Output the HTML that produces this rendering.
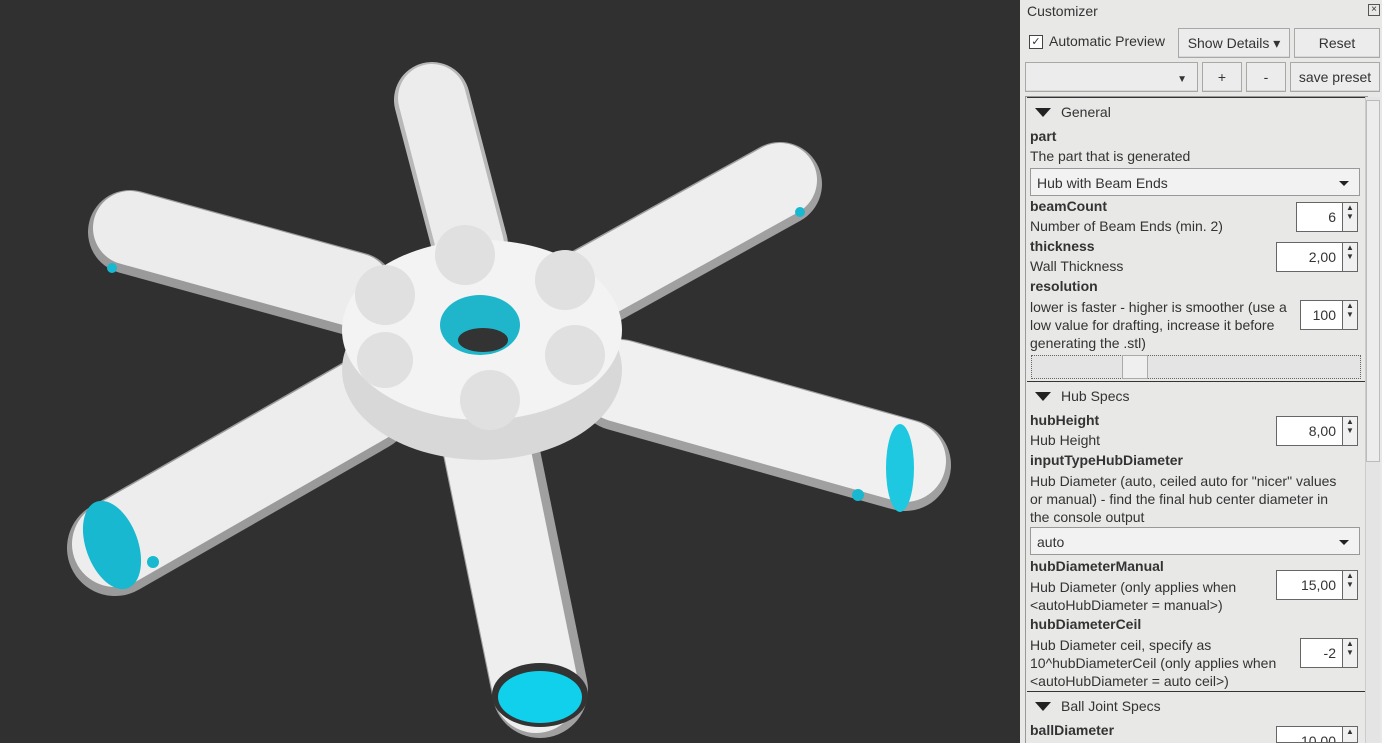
<!DOCTYPE html><html style="height:743px;overflow:hidden"><head><style>
body{margin:0;width:1382px;height:743px;overflow:hidden;background:#303030;font-family:"Liberation Sans","DejaVu Sans",sans-serif;font-size:14px;color:#333;position:relative}
#w{position:absolute;left:0;top:0;width:1382px;height:743px;overflow:hidden}
#p{position:absolute;left:1020px;top:0;width:362px;height:743px;background:#e8e8e7}
.a{position:absolute;white-space:nowrap}
.btn{position:absolute;border:1px solid #a8a8a8;background:#ececec;box-shadow:inset 0 -1px #d8d8d8;text-align:center;line-height:28px;color:#333}
.b{font-weight:bold}
.in{position:absolute;background:#fff;border:1px solid #666;border-right:none;text-align:right;padding-right:6px;box-sizing:border-box;line-height:28px}
.sp{position:absolute;width:16px;border:1px solid #666;background:#f0f0f0;font-size:8px;text-align:center;box-sizing:border-box}
.hd{position:absolute;left:1027px;width:338px;height:28px;border-top:1px solid #333;background:#e8e8e7;line-height:28px;font-size:14px}
.hd:before{content:"";position:absolute;left:8px;top:10px;border-left:8px solid transparent;border-right:8px solid transparent;border-top:9px solid #222}
.cb{position:absolute;left:1030px;width:330px;height:28px;border:1px solid #999;background:#f2f2f2;line-height:28px;box-sizing:border-box;padding-left:6px}
.cb:after{content:"";position:absolute;right:10px;top:12px;border-left:5px solid transparent;border-right:5px solid transparent;border-top:5px solid #222}
</style></head><body><div id="w">
<svg width="1020" height="743" style="position:absolute;left:0;top:0">
<g stroke-linecap="round" fill="none">
<line x1="432" y1="100" x2="470" y2="245" stroke="#b8b8b8" stroke-width="76"/>
<line x1="432" y1="98" x2="470" y2="245" stroke="#ececec" stroke-width="68"/>
<line x1="130" y1="232" x2="355" y2="294" stroke="#9a9a9a" stroke-width="84"/>
<line x1="130" y1="228" x2="355" y2="290" stroke="#ececec" stroke-width="74"/>
<line x1="780" y1="184" x2="585" y2="292" stroke="#a0a0a0" stroke-width="84"/>
<line x1="780" y1="180" x2="585" y2="288" stroke="#eeeeee" stroke-width="74"/>
<line x1="905" y1="465" x2="620" y2="385" stroke="#a0a0a0" stroke-width="92"/>
<line x1="905" y1="461" x2="620" y2="381" stroke="#f0f0f0" stroke-width="82"/>
<line x1="115" y1="548" x2="365" y2="405" stroke="#9a9a9a" stroke-width="96"/>
<line x1="115" y1="544" x2="365" y2="401" stroke="#ededed" stroke-width="86"/>
<line x1="540" y1="690" x2="490" y2="445" stroke="#a0a0a0" stroke-width="96"/>
<line x1="536" y1="690" x2="486" y2="445" stroke="#eeeeee" stroke-width="86"/>
</g>
<ellipse cx="900" cy="468" rx="14" ry="44" fill="#1ec8e0"/>
<ellipse cx="112" cy="545" rx="26" ry="46" fill="#18b8d0" transform="rotate(-20 112 545)"/>
<ellipse cx="540" cy="695" rx="48" ry="32" fill="#333"/>
<ellipse cx="540" cy="697" rx="42" ry="26" fill="#10d0ec"/>
<ellipse cx="482" cy="370" rx="140" ry="90" fill="#d8d8d8"/>
<ellipse cx="482" cy="330" rx="140" ry="90" fill="#f3f3f3"/>
<g fill="#e0e0e0"><circle cx="465" cy="255" r="30"/><circle cx="385" cy="295" r="30"/><circle cx="565" cy="280" r="30"/><circle cx="385" cy="360" r="28"/><circle cx="575" cy="355" r="30"/><circle cx="490" cy="400" r="30"/></g>
<ellipse cx="480" cy="325" rx="40" ry="30" fill="#1fb6cc"/>
<ellipse cx="483" cy="340" rx="25" ry="12" fill="#333"/>
<circle cx="800" cy="212" r="5" fill="#18b8d0"/><circle cx="112" cy="268" r="5" fill="#18b8d0"/><circle cx="858" cy="495" r="6" fill="#18b8d0"/><circle cx="153" cy="562" r="6" fill="#18b8d0"/>
</svg>
<div id="p"></div>
<div class="a" style="left:1027px;top:3px">Customizer</div>
<div class="a" style="left:1368px;top:4px;width:10px;height:10px;border:1px solid #555;font-size:10px;line-height:10px;text-align:center">×</div>
<div class="a" style="left:1029px;top:35px;width:12px;height:12px;border:1px solid #444;background:#fff;font-size:11px;line-height:12px;text-align:center">✓</div>
<div class="a" style="left:1049px;top:33px">Automatic Preview</div>
<div class="btn" style="left:1178px;top:28px;width:110px;height:28px">Show Details ▾</div>
<div class="btn" style="left:1294px;top:28px;width:84px;height:28px">Reset</div>
<div class="btn" style="left:1025px;top:62px;width:171px;height:28px;text-align:right;padding-right:0"><span style="font-size:10px;margin-right:10px">▼</span></div>
<div class="btn" style="left:1202px;top:62px;width:38px;height:28px">+</div>
<div class="btn" style="left:1246px;top:62px;width:38px;height:28px">-</div>
<div class="btn" style="left:1290px;top:62px;width:88px;height:28px">save preset</div>
<div class="a" style="left:1025px;top:96px;width:342px;height:647px;border-left:1px solid #999;border-top:1px solid #999"></div>
<div class="a" style="left:1365px;top:97px;width:14px;height:646px;background:#e4e4e4;border-left:1px solid #ccc"></div>
<div class="a" style="left:1366px;top:100px;width:12px;height:360px;background:#ececec;border:1px solid #bbb"></div>
<div class="hd" style="top:97px"><span style="margin-left:34px">General</span></div>
<div class="a b" style="left:1030px;top:128px">part</div>
<div class="a" style="left:1030px;top:148px">The part that is generated</div>
<div class="cb" style="top:168px">Hub with Beam Ends</div>
<div class="a b" style="left:1030px;top:198px">beamCount</div>
<div class="a" style="left:1030px;top:218px">Number of Beam Ends (min. 2)</div>
<div class="in" style="left:1296px;top:202px;width:46px;height:30px">6</div><div class="sp" style="left:1342px;top:202px;height:30px">▲<br>▼</div>
<div class="a b" style="left:1030px;top:238px">thickness</div>
<div class="a" style="left:1030px;top:258px">Wall Thickness</div>
<div class="in" style="left:1276px;top:242px;width:66px;height:30px">2,00</div><div class="sp" style="left:1342px;top:242px;height:30px">▲<br>▼</div>
<div class="a b" style="left:1030px;top:278px">resolution</div>
<div class="a" style="left:1030px;top:298px;line-height:18px">lower is faster - higher is smoother (use a<br>low value for drafting, increase it before<br>generating the .stl)</div>
<div class="in" style="left:1300px;top:300px;width:42px;height:30px">100</div><div class="sp" style="left:1342px;top:300px;height:30px">▲<br>▼</div>
<div class="a" style="left:1031px;top:355px;width:328px;height:22px;border:1px dotted #666;background:#e4e4e4"></div>
<div class="a" style="left:1122px;top:355px;width:24px;height:22px;border:1px solid #aaa;background:#efefef"></div>
<div class="hd" style="top:381px"><span style="margin-left:34px">Hub Specs</span></div>
<div class="a b" style="left:1030px;top:412px">hubHeight</div>
<div class="a" style="left:1030px;top:432px">Hub Height</div>
<div class="in" style="left:1276px;top:416px;width:66px;height:30px">8,00</div><div class="sp" style="left:1342px;top:416px;height:30px">▲<br>▼</div>
<div class="a b" style="left:1030px;top:452px">inputTypeHubDiameter</div>
<div class="a" style="left:1030px;top:472px;line-height:18px">Hub Diameter (auto, ceiled auto for "nicer" values<br>or manual) - find the final hub center diameter in<br>the console output</div>
<div class="cb" style="top:527px">auto</div>
<div class="a b" style="left:1030px;top:558px">hubDiameterManual</div>
<div class="a" style="left:1030px;top:578px;line-height:18px">Hub Diameter (only applies when<br>&lt;autoHubDiameter = manual&gt;)</div>
<div class="in" style="left:1276px;top:570px;width:66px;height:30px">15,00</div><div class="sp" style="left:1342px;top:570px;height:30px">▲<br>▼</div>
<div class="a b" style="left:1030px;top:616px">hubDiameterCeil</div>
<div class="a" style="left:1030px;top:636px;line-height:18px">Hub Diameter ceil, specify as<br>10^hubDiameterCeil (only applies when<br>&lt;autoHubDiameter = auto ceil&gt;)</div>
<div class="in" style="left:1300px;top:638px;width:42px;height:30px">-2</div><div class="sp" style="left:1342px;top:638px;height:30px">▲<br>▼</div>
<div class="hd" style="top:691px"><span style="margin-left:34px">Ball Joint Specs</span></div>
<div class="a b" style="left:1030px;top:722px">ballDiameter</div>
<div class="in" style="left:1276px;top:726px;width:66px;height:17px;line-height:28px;overflow:hidden">10,00</div><div class="sp" style="left:1342px;top:726px;height:17px">▲</div>
</div></body></html>
